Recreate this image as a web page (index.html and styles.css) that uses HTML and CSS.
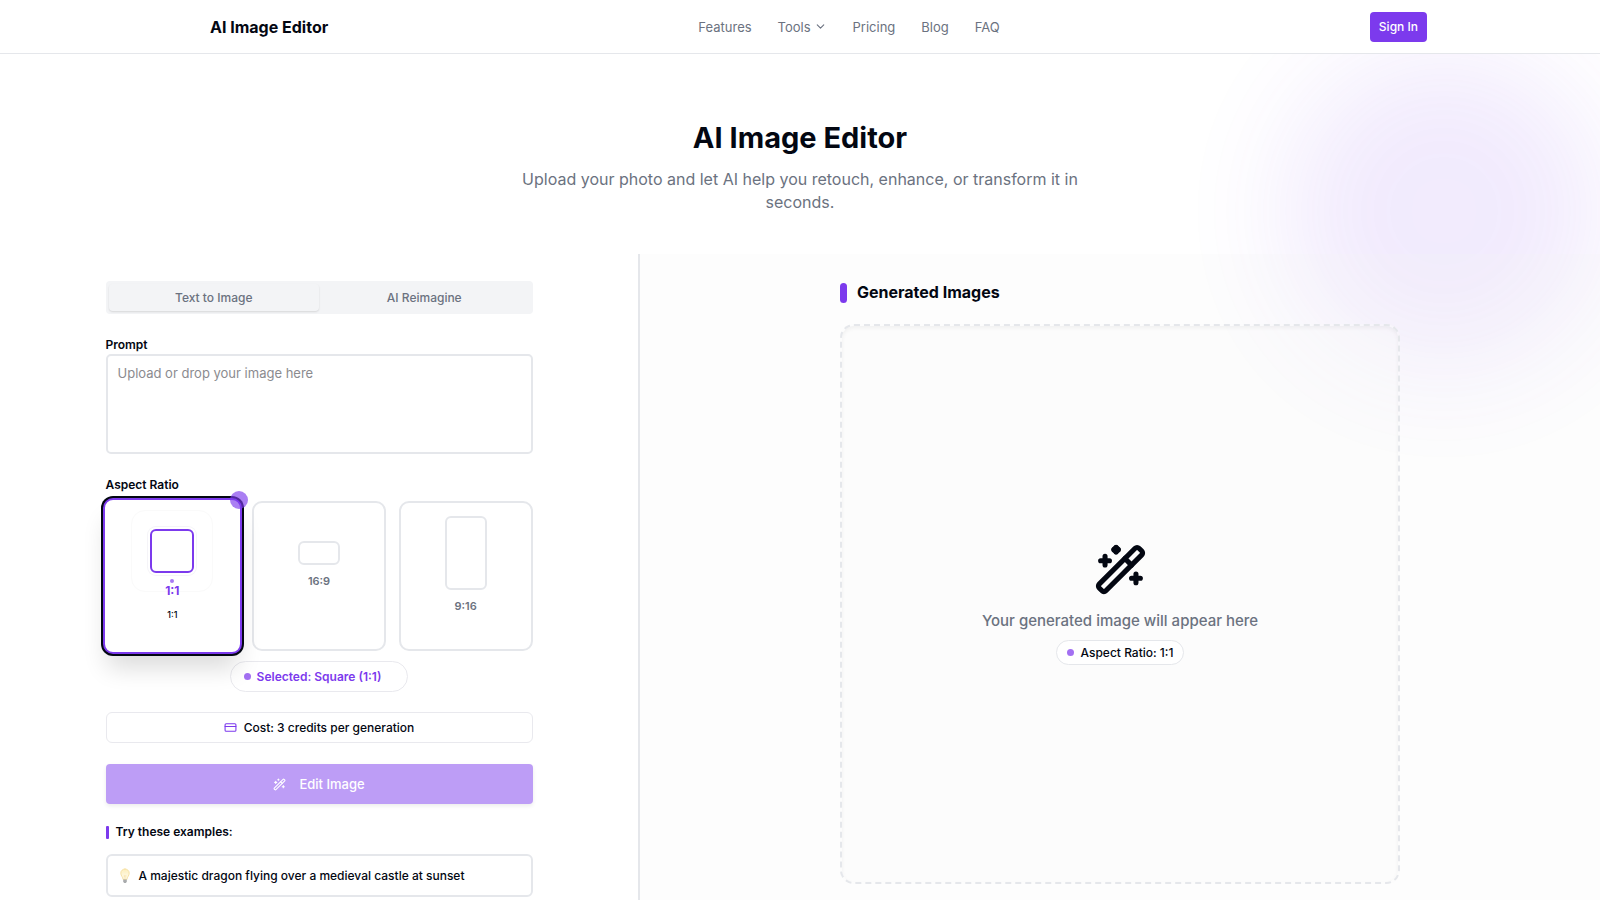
FILE: index.html
```html
<!DOCTYPE html>
<html lang="en">

<head>
    <meta charset="UTF-8">
    <meta name="viewport" content="width=device-width, initial-scale=1.0">
    <title>AI Image Editor</title>
    <link rel="stylesheet" href="styles.css">
</head>

<body>
    <header class="site-header">
        <div class="header-inner">
            <a href="#" class="brand">AI Image Editor</a>
            <nav class="nav">
                <a href="#features">Features</a>
                <a href="#tools">Tools
                    <svg class="chevron" viewBox="0 0 24 24"><path d="m6 9 6 6 6-6" /></svg>
                </a>
                <a href="#pricing">Pricing</a>
                <a href="#blog">Blog</a>
                <a href="#faq">FAQ</a>
            </nav>
            <button type="button" class="sign-in">Sign In</button>
        </div>
    </header>

    <main class="page">
        <div class="glow"></div>

        <section class="hero">
            <h1>AI Image Editor</h1>
            <p>Upload your photo and let AI help you retouch, enhance, or transform it in seconds.</p>
        </section>

        <div class="workspace">
            <section class="controls">
                <form class="controls-inner">
                    <div class="tabs">
                        <button type="button" class="tab active">Text to Image</button>
                        <button type="button" class="tab">AI Reimagine</button>
                    </div>

                    <label class="field-label" for="prompt">Prompt</label>
                    <textarea id="prompt" class="prompt" placeholder="Upload or drop your image here"></textarea>

                    <div class="field-label" id="ratio-label">Aspect Ratio</div>
                    <div class="ratios" role="group" aria-labelledby="ratio-label">
                        <button type="button" class="ratio selected">
                            <span class="badge"></span>
                            <span class="halo"><span class="shape square"></span></span>
                            <span class="tiny-dot"></span>
                            <span class="ratio-name">1:1</span>
                            <span class="ratio-note">1:1</span>
                        </button>
                        <button type="button" class="ratio">
                            <span class="shape landscape"></span>
                            <span class="ratio-name">16:9</span>
                        </button>
                        <button type="button" class="ratio">
                            <span class="shape portrait"></span>
                            <span class="ratio-name">9:16</span>
                        </button>
                    </div>
                    <div class="selected-pill"><span class="dot"></span>Selected: Square (1:1)</div>

                    <div class="cost">
                        <svg class="card-icon" viewBox="0 0 24 24"><rect x="2" y="5" width="20" height="14" rx="2" /><path d="M2 10h20" /></svg>
                        Cost: 3 credits per generation
                    </div>

                    <button type="button" class="submit">
                        <svg class="wand" viewBox="0 0 24 24">
                            <path d="m21.64 3.64-1.28-1.28a1.21 1.21 0 0 0-1.72 0L2.36 18.64a1.21 1.21 0 0 0 0 1.72l1.28 1.28a1.2 1.2 0 0 0 1.72 0L21.64 5.36a1.2 1.2 0 0 0 0-1.72" />
                            <path d="m14 7 3 3M5 6v4M19 14v4M10 2v2M7 8H3M21 16h-4M11 3H9" />
                        </svg>
                        Edit Image
                    </button>

                    <h3 class="examples-title">Try these examples:</h3>
                    <button type="button" class="example">
                        <svg class="bulb" viewBox="0 0 14 18">
                            <defs>
                                <linearGradient id="bulb-fill" x1="0" y1="0" x2="0" y2="1">
                                    <stop offset="0" stop-color="#fdeebb" />
                                    <stop offset="1" stop-color="#fffdf3" />
                                </linearGradient>
                            </defs>
                            <path class="glass" d="M7 2C4.600 2 2.800 3.800 2.800 6.200c0 2.400 2 3.800 2.300 6.300h3.800c.3-2.500 2.300-3.900 2.300-6.300C11.200 3.800 9.400 2 7 2z" />
                            <path class="filament" d="M6.200 12V8.500l.8.800.8-.8V12" />
                            <path class="socket" d="M5.200 12.500h3.600v2.300L7.800 16H6.200l-1-1.200z" />
                        </svg>
                        A majestic dragon flying over a medieval castle at sunset
                    </button>
                </form>
            </section>

            <section class="results">
                <div class="results-inner">
                    <h2>Generated Images</h2>
                    <div class="canvas">
                        <svg class="wand" viewBox="0 0 24 24">
                            <path d="m21.64 3.64-1.28-1.28a1.21 1.21 0 0 0-1.72 0L2.36 18.64a1.21 1.21 0 0 0 0 1.72l1.28 1.28a1.2 1.2 0 0 0 1.72 0L21.64 5.36a1.2 1.2 0 0 0 0-1.72" />
                            <path d="m14 7 3 3M5 6v4M19 14v4M10 2v2M7 8H3M21 16h-4M11 3H9" />
                            <path class="spark" d="m10 2 1 1-1 1-1-1z" />
                        </svg>
                        <p>Your generated image will appear here</p>
                        <div class="ratio-pill"><span class="dot"></span>Aspect Ratio: 1:1</div>
                    </div>
                </div>
            </section>
        </div>
    </main>
</body>

</html>
```

FILE: styles.css
```css
* {
    box-sizing: border-box;
}

body {
    font-family: Inter, "Liberation Sans", sans-serif;
    font-size: 12px;
    line-height: 16px;
    margin: 0;
    color: #030712;
    background-color: #fff;
}

button,
textarea {
    font-family: inherit;
    color: inherit;
}

button {
    cursor: pointer;
}

svg {
    fill: none;
    stroke: currentColor;
    stroke-width: 2;
    stroke-linecap: round;
    stroke-linejoin: round;
    flex-shrink: 0;
}

/* header */
.site-header {
    border-bottom: 1px solid #e5e7eb;
    background-color: #fff;
}

.header-inner {
    max-width: 1254px;
    height: 53px;
    margin: 0 auto;
    display: flex;
    align-items: center;
    justify-content: space-between;
}

.brand {
    padding-left: 37px;
    font-size: 16px;
    font-weight: 700;
    color: #030712;
    text-decoration: none;
}

.nav {
    display: flex;
    gap: 26px;
}

.nav a {
    display: flex;
    align-items: center;
    gap: 3px;
    font-size: 13px;
    color: #6b7280;
    text-decoration: none;
}

.chevron {
    width: 13px;
    height: 13px;
}

.sign-in {
    height: 30px;
    padding: 0 9px;
    border: none;
    border-radius: 4px;
    font-size: 12px;
    font-weight: 500;
    color: #fff;
    background-color: #7c3aed;
}

/* hero */
.page {
    position: relative;
    overflow: hidden;
}

.glow {
    position: absolute;
    top: -3px;
    right: -4px;
    width: 320px;
    height: 320px;
    border-radius: 50%;
    background-color: #7c3aed;
    opacity: 0.1;
    filter: blur(56px);
}

.hero {
    position: relative;
    max-width: 560px;
    margin: 0 auto;
    padding: 66px 0 40px;
    text-align: center;
}

.hero h1 {
    margin: 0 0 12px;
    font-size: 29px;
    line-height: 36px;
    font-weight: 700;
}

.hero p {
    margin: 0;
    font-size: 16px;
    line-height: 23px;
    color: #6b7280;
}

/* workspace */
.workspace {
    position: relative;
    display: grid;
    grid-template-columns: 2fr 3fr;
}

.controls {
    padding: 27px;
    border-right: 2px solid #e5e7eb;
}

.controls-inner {
    max-width: 427px;
    margin: 0 auto;
    display: flex;
    flex-direction: column;
}

.tabs {
    display: grid;
    grid-template-columns: 1fr 1fr;
    height: 33px;
    margin-bottom: 23px;
    padding: 3px;
    border-radius: 4px;
    background-color: #f3f4f6;
}

.tab {
    border: none;
    border-radius: 4px;
    font-size: 12px;
    font-weight: 500;
    color: #6b7280;
    background: none;
}

.tab.active {
    box-shadow: 0 1px 2px rgba(0, 0, 0, 0.12);
}

.field-label {
    margin-bottom: 1px;
    font-weight: 600;
}

.prompt {
    height: 100px;
    margin-bottom: 23px;
    padding: 7px 10px;
    border: 2px solid #e5e7eb;
    border-radius: 5px;
    font-size: 13px;
    line-height: 20px;
    background-color: #fff;
    resize: none;
}

.prompt::placeholder {
    color: #8b8b8f;
}

.ratios {
    display: grid;
    grid-template-columns: repeat(3, 1fr);
    gap: 13px;
    height: 150px;
    margin-top: 7px;
    margin-bottom: 10px;
}

.ratio {
    display: flex;
    flex-direction: column;
    align-items: center;
    padding: 0;
    border: 2px solid #e5e7eb;
    border-radius: 10px;
    background-color: #fff;
}

.ratio.selected {
    position: relative;
    margin: -3px;
    border-color: #7c3aed;
    box-shadow: 0 0 0 2px #030712, 0 18px 24px -4px rgba(0, 0, 0, 0.14);
}

.shape {
    width: 42px;
    border: 2px solid #e5e7eb;
    border-radius: 6px;
}

.square {
    width: 44px;
    height: 44px;
    border-color: #7c3aed;
    box-shadow: 0 0 0 2px #fff, 0 0 0 3px #f5f4f8;
}

.landscape {
    height: 24px;
    margin-top: 38px;
}

.portrait {
    height: 74px;
    margin-top: 13px;
}

.halo {
    display: grid;
    place-items: center;
    width: 82px;
    height: 82px;
    margin-top: 10px;
    margin-bottom: -14px;
    border: 1px solid #fafafa;
    border-radius: 14px;
}

.badge {
    position: absolute;
    top: -9px;
    right: -8px;
    width: 18px;
    height: 18px;
    border-radius: 50%;
    background-color: #7c3aed;
    opacity: 0.65;
}

.tiny-dot {
    width: 4px;
    height: 4px;
    margin-top: 1px;
    border-radius: 50%;
    background-color: #a77bf3;
}

.ratio-name {
    margin-top: 8px;
    font-size: 11px;
    line-height: 16px;
    font-weight: 600;
    color: #6b7280;
}

.selected .ratio-name {
    margin-top: 0;
    font-size: 12px;
    font-weight: 700;
    color: #7c3aed;
}

.ratio-note {
    margin-top: 8px;
    font-size: 9px;
    line-height: 16px;
    font-weight: 500;
}

.dot {
    width: 7px;
    height: 7px;
    border-radius: 50%;
    background-color: #a370f2;
}

.selected-pill {
    align-self: center;
    display: flex;
    align-items: center;
    gap: 6px;
    height: 31px;
    margin-bottom: 20px;
    padding: 0 26px 0 13px;
    border: 1px solid #e9e9ee;
    border-radius: 16px;
    font-weight: 600;
    color: #7c3aed;
    background-color: #fff;
}

.cost {
    display: flex;
    align-items: center;
    justify-content: center;
    gap: 7px;
    height: 31px;
    margin-bottom: 21px;
    border: 1px solid #e9e9ee;
    border-radius: 6px;
    font-weight: 500;
    background-color: #fff;
}

.card-icon {
    width: 13px;
    height: 13px;
    color: #7c3aed;
}

.submit {
    display: flex;
    align-items: center;
    justify-content: center;
    gap: 13px;
    height: 40px;
    margin-bottom: 20px;
    padding: 0;
    border: none;
    border-radius: 4px;
    font-size: 13px;
    font-weight: 500;
    color: #fff;
    background-color: #bd9df6;
    box-shadow: 0 2px 4px rgba(0, 0, 0, 0.08);
}

.submit .wand {
    width: 13px;
    height: 13px;
}

.examples-title {
    display: flex;
    align-items: center;
    gap: 7px;
    margin: 0 0 14px;
    font-size: 12px;
    font-weight: 600;
}

.examples-title::before {
    content: "";
    width: 3px;
    height: 13px;
    border-radius: 1px;
    background-color: #7c3aed;
}

.example {
    display: flex;
    align-items: center;
    gap: 7px;
    height: 43px;
    padding: 0 10px;
    border: 2px solid #e5e7eb;
    border-radius: 6px;
    font-size: 12px;
    font-weight: 500;
    background-color: #fff;
}

.bulb {
    width: 14px;
    height: 18px;
}

.glass {
    fill: url(#bulb-fill);
    stroke: #f7e2a6;
    stroke-width: 1;
}

.filament {
    stroke: #f3d68c;
    stroke-width: 0.5;
}

.socket {
    fill: #a9abad;
    stroke: none;
}

/* results */
.results {
    padding: 27px;
    background-color: rgba(243, 244, 246, 0.2);
}

.results-inner {
    max-width: 560px;
    margin: 0 auto;
}

.results h2 {
    display: flex;
    align-items: center;
    gap: 10px;
    margin: 0 0 20px;
    font-size: 16px;
    line-height: 23px;
    font-weight: 700;
}

.results h2::before {
    content: "";
    width: 7px;
    height: 20px;
    border-radius: 4px;
    background-color: #7c3aed;
}

.canvas {
    display: flex;
    flex-direction: column;
    align-items: center;
    justify-content: center;
    aspect-ratio: 1;
    border: 2px dashed #e5e7eb;
    border-radius: 14px;
    background-color: rgba(249, 250, 251, 0.4);
    box-shadow: inset 0 2px 4px rgba(0, 0, 0, 0.05);
}

.canvas .wand {
    width: 53px;
    height: 53px;
    stroke-width: 2.3;
}

.spark {
    fill: currentColor;
}

.canvas p {
    margin: 13px 0 7px;
    font-size: 15px;
    line-height: 24px;
    font-weight: 500;
    color: #6b7280;
}

.ratio-pill {
    display: flex;
    align-items: center;
    gap: 7px;
    height: 25px;
    padding: 0 10px;
    border: 1px solid #e5e7eb;
    border-radius: 13px;
    font-weight: 500;
    background-color: #fff;
}
```
